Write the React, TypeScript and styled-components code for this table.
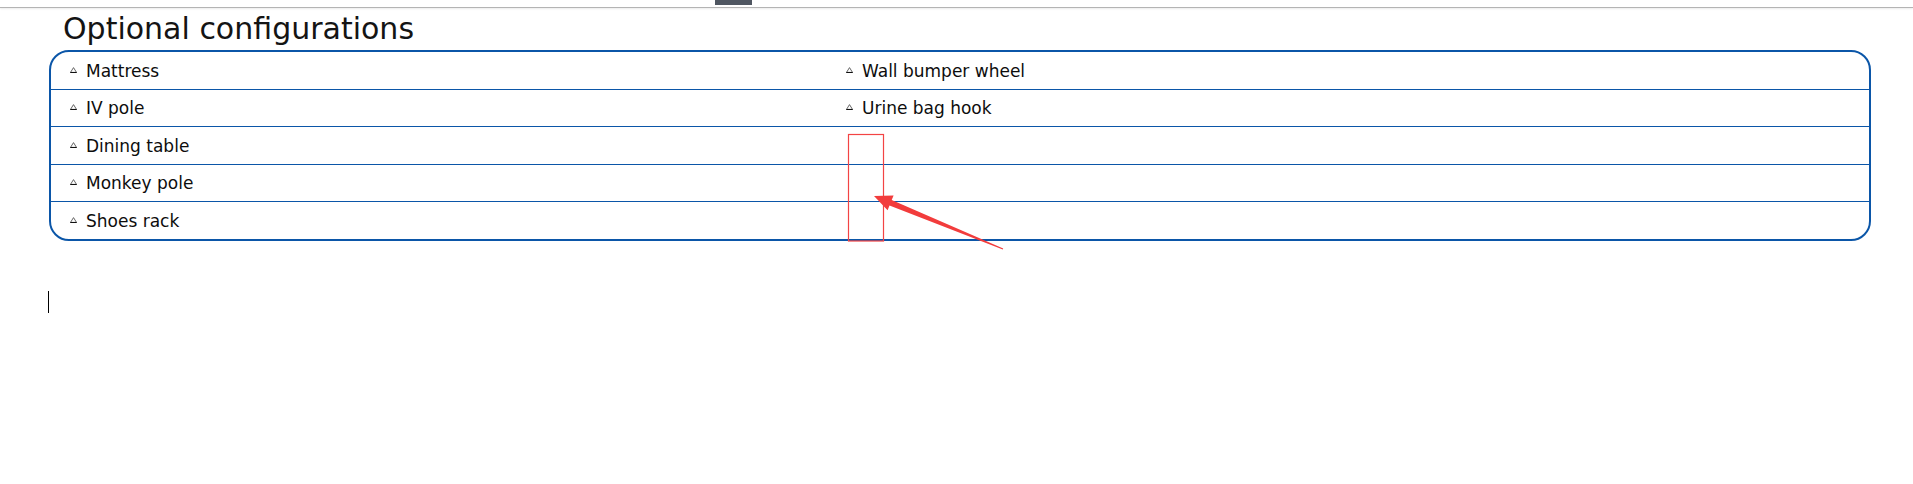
import React from "react";
import styled, { createGlobalStyle } from "styled-components";

const Global = createGlobalStyle`
  html, body { margin: 0; padding: 0; background: #ffffff; }
  body { font-family: "DejaVu Sans", Verdana, sans-serif; color: #111111; }
`;

const Page = styled.div`
  position: relative;
  width: 1913px;
  height: 484px;
  overflow: hidden;
  background: #ffffff;
`;

const TopBar = styled.div`
  display: flex;
  align-items: flex-start;
  height: 7px;
  padding-left: 715px;
  border-bottom: 1px solid #b4b4b4;
  box-shadow: 0 1px 2px rgba(0, 0, 0, 0.08);
`;

const Tab = styled.div`
  width: 37px;
  height: 5px;
  background: #4f5661;
`;

const Content = styled.div`
  padding: 0 42px 0 49px;
`;

const Title = styled.h2`
  margin: 3px 0 4px 14px;
  font-size: 30px;
  font-weight: normal;
  line-height: normal;
  color: #141414;
`;

const Table = styled.div`
  border: 2px solid #0b56a8;
  border-radius: 20px;
  overflow: hidden;
`;

const Row = styled.div<{ $h: number }>`
  display: grid;
  grid-template-columns: 776px 1fr;
  height: ${(p) => p.$h}px;
  border-bottom: 1px solid #0b56a8;
  &:last-child {
    border-bottom: none;
  }
`;

const Cell = styled.div`
  display: flex;
  align-items: center;
  gap: 9px;
  padding-left: 19px;
  font-size: 17px;
  line-height: normal;
  color: #0d0d0d;
`;

const Bullet = styled.svg`
  width: 7px;
  height: 6px;
  flex: none;
  margin-top: -2px;
`;

const Caret = styled.div`
  margin: 50px 0 0 -1px;
  width: 1px;
  height: 22px;
  background: #000000;
`;

const Overlay = styled.svg`
  position: absolute;
  left: 0;
  top: 0;
  pointer-events: none;
`;

const rows: { a: string; b: string; h: number }[] = [
  { a: "Mattress", b: "Wall bumper wheel", h: 37 },
  { a: "IV pole", b: "Urine bag hook", h: 36 },
  { a: "Dining table", b: "", h: 37 },
  { a: "Monkey pole", b: "", h: 36 },
  { a: "Shoes rack", b: "", h: 37 },
];

function Item({ label }: { label: string }) {
  if (!label) return <Cell />;
  return (
    <Cell>
      <Bullet viewBox="0 0 7 6">
        <polygon points="3.5,0.6 6.5,5.4 0.5,5.4" fill="#fff" stroke="#555" strokeWidth="0.9" />
        <line x1="0.3" y1="5.5" x2="6.7" y2="5.5" stroke="#111" strokeWidth="1" />
      </Bullet>
      <span>{label}</span>
    </Cell>
  );
}

export default function App() {
  return (
    <Page>
      <Global />
      <TopBar>
        <Tab />
      </TopBar>
      <Content>
        <Title>Optional configurations</Title>
        <Table>
          {rows.map((r, i) => (
            <Row key={i} $h={r.h}>
              <Item label={r.a} />
              <Item label={r.b} />
            </Row>
          ))}
        </Table>
        <Caret />
      </Content>
      <Overlay width="1913" height="484" viewBox="0 0 1913 484">
        <rect x="848.5" y="134.5" width="35" height="106.5" fill="none" stroke="#f34444" strokeWidth="1.2" />
        <polygon
          points="874,196 893.6,195.4 891.7,200 1003.2,248.5 1002.8,249.5 889.5,205.6 887.6,210.2"
          fill="#f23c3c"
        />
      </Overlay>
    </Page>
  );
}
